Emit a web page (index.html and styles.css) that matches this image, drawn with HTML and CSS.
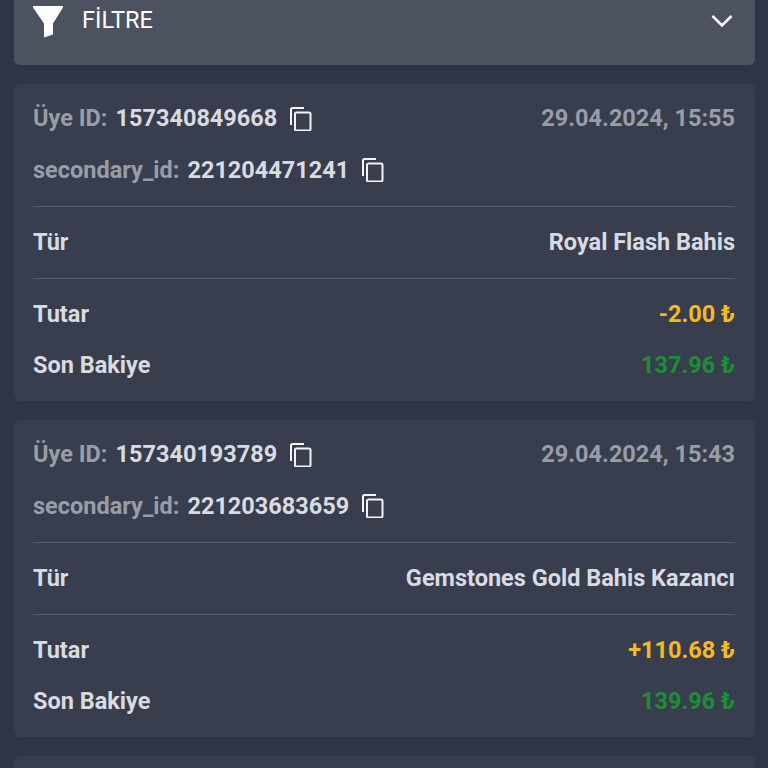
FILE: index.html
```html
<!DOCTYPE html>
<html lang="tr">
<head>
  <meta charset="UTF-8" />
  <title>Hesap Hareketleri</title>
  <link rel="stylesheet" href="styles.css">
</head>
<body>
  <div class="filter-bar">
    <div class="filter-title">
      <svg class="filter-icon" viewBox="0 0 30 32"><path d="M0 0H30V1.5L20 17.5V28.5L11 31.5V17.5L0 1.5Z" fill="#fff"/></svg>
      <span>FİLTRE</span>
    </div>
    <svg class="chevron" viewBox="0 0 24 16"><path d="M2.5 3L12 12.5L21.5 3" fill="none" stroke="#fff" stroke-width="2.6"/></svg>
  </div>

  <div class="card">
    <div class="card-head">
      <div class="id-rows">
        <div class="id-row">
          <span class="muted">Üye ID:</span> <span class="id-value">157340849668</span>
          <svg class="copy" viewBox="0 0 24 24"><path d="M2 18V2.5C2 1.7 2.7 1 3.5 1H15M7 5.5H20C20.8 5.5 21.5 6.2 21.5 7V22C21.5 22.8 20.8 23.5 20 23.5H7.5C6.7 23.5 6 22.8 6 22V7C6 6.2 6.7 5.5 7.5 5.5Z" fill="none" stroke="#f2f3f5" stroke-width="2"/></svg>
        </div>
        <div class="id-row">
          <span class="muted">secondary_id:</span> <span class="id-value">221204471241</span>
          <svg class="copy" viewBox="0 0 24 24"><path d="M2 18V2.5C2 1.7 2.7 1 3.5 1H15M7 5.5H20C20.8 5.5 21.5 6.2 21.5 7V22C21.5 22.8 20.8 23.5 20 23.5H7.5C6.7 23.5 6 22.8 6 22V7C6 6.2 6.7 5.5 7.5 5.5Z" fill="none" stroke="#f2f3f5" stroke-width="2"/></svg>
        </div>
      </div>
      <span class="muted date">29.04.2024, 15:55</span>
    </div>
    <div class="row row-type">
      <span>Tür</span>
      <span>Royal Flash Bahis</span>
    </div>
    <div class="amounts">
      <div class="row">
        <span>Tutar</span>
        <span class="amount">-2.00 ₺</span>
      </div>
      <div class="row">
        <span>Son Bakiye</span>
        <span class="balance">137.96 ₺</span>
      </div>
    </div>
  </div>

  <div class="card">
    <div class="card-head">
      <div class="id-rows">
        <div class="id-row">
          <span class="muted">Üye ID:</span> <span class="id-value">157340193789</span>
          <svg class="copy" viewBox="0 0 24 24"><path d="M2 18V2.5C2 1.7 2.7 1 3.5 1H15M7 5.5H20C20.8 5.5 21.5 6.2 21.5 7V22C21.5 22.8 20.8 23.5 20 23.5H7.5C6.7 23.5 6 22.8 6 22V7C6 6.2 6.7 5.5 7.5 5.5Z" fill="none" stroke="#f2f3f5" stroke-width="2"/></svg>
        </div>
        <div class="id-row">
          <span class="muted">secondary_id:</span> <span class="id-value">221203683659</span>
          <svg class="copy" viewBox="0 0 24 24"><path d="M2 18V2.5C2 1.7 2.7 1 3.5 1H15M7 5.5H20C20.8 5.5 21.5 6.2 21.5 7V22C21.5 22.8 20.8 23.5 20 23.5H7.5C6.7 23.5 6 22.8 6 22V7C6 6.2 6.7 5.5 7.5 5.5Z" fill="none" stroke="#f2f3f5" stroke-width="2"/></svg>
        </div>
      </div>
      <span class="muted date">29.04.2024, 15:43</span>
    </div>
    <div class="row row-type">
      <span>Tür</span>
      <span>Gemstones Gold Bahis Kazancı</span>
    </div>
    <div class="amounts">
      <div class="row">
        <span>Tutar</span>
        <span class="amount">+110.68 ₺</span>
      </div>
      <div class="row">
        <span>Son Bakiye</span>
        <span class="balance">139.96 ₺</span>
      </div>
    </div>
  </div>

  <div class="card card-next"></div>
</body>
</html>
```

FILE: styles.css
```css
html, body {
  height: 768px;
  overflow: hidden;
}
body {
  margin: 0;
  padding: 0 13px 0 14px;
  background-color: #2f3544;
  font-family: Roboto, "Liberation Sans", sans-serif;
  font-size: 23.5px;
  font-weight: 700;
  color: #d9dbe1;
}
.filter-bar {
  display: flex;
  justify-content: space-between;
  align-items: flex-start;
  height: 65px;
  box-sizing: border-box;
  padding: 4px 21px 0 19px;
  background-color: #4c5260;
  border-radius: 0 0 6px 6px;
}
.filter-title {
  display: flex;
  align-items: center;
  gap: 19px;
  font-weight: 400;
  color: #fff;
}
.filter-icon {
  width: 30px;
  height: 32px;
  margin-top: 2px;
  margin-bottom: -2px;
}
.chevron {
  width: 24px;
  height: 16px;
  margin-top: 9px;
}
.card {
  height: 317px;
  margin-top: 19px;
  box-sizing: border-box;
  padding: 16px 20px 0 19px;
  background-color: #383e4d;
  border-radius: 6px;
}
.card-next {
  height: 12px;
  border-radius: 6px 6px 0 0;
}
.card-head {
  display: flex;
  justify-content: space-between;
  align-items: flex-start;
  padding-bottom: 18px;
  border-bottom: 1px solid #575c69;
}
.id-row {
  display: flex;
  align-items: center;
  gap: 8px;
  height: 36px;
  margin-bottom: 15.5px;
}
.id-row:last-child {
  margin-bottom: 0;
}
.muted {
  color: #999da8;
}
.date {
  line-height: 36px;
}
.copy {
  width: 24px;
  height: 24px;
  margin-left: 4px;
  margin-top: 1px;
}
.row {
  display: flex;
  justify-content: space-between;
  align-items: center;
  height: 36px;
}
.row-type {
  height: 71px;
  border-bottom: 1px solid #575c69;
}
.amounts {
  display: flex;
  flex-direction: column;
  gap: 15.5px;
  padding-top: 17px;
}
.amount {
  color: #f5b921;
}
.balance {
  color: #1a8f33;
}
```
